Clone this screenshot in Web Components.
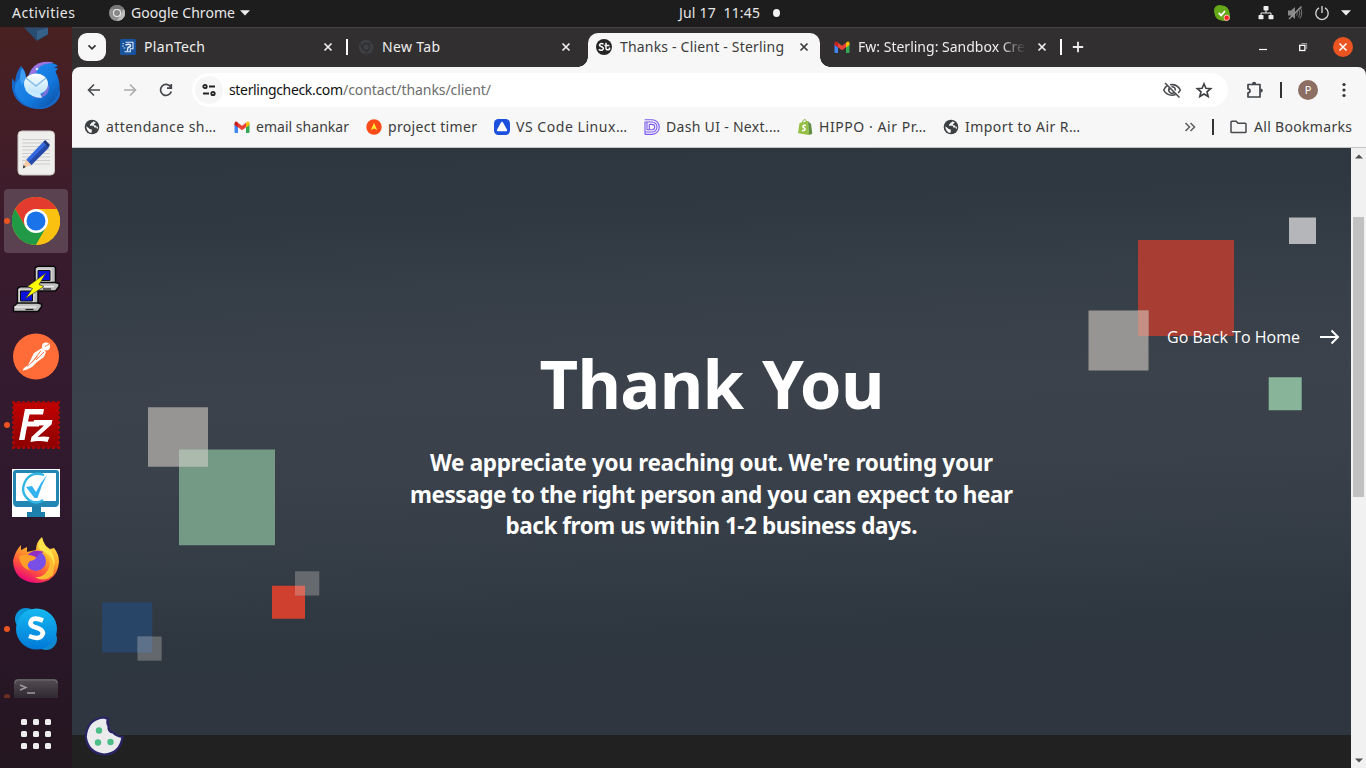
<!DOCTYPE html>
<html lang="en">
<head>
<meta charset="utf-8">
<title>Thanks - Client - Sterling</title>
<style>
html,body{margin:0;height:100%;overflow:hidden;background:#222}
body{font-family:"Noto Sans","Open Sans",sans-serif}
</style>
</head>
<body>
<desk-top></desk-top>
<script>
const define=(name,html,setup)=>customElements.define(name,class extends HTMLElement{
  constructor(){super();this.attachShadow({mode:'open'})}
  connectedCallback(){
    this.shadowRoot.innerHTML=typeof html==='function'?html(this):html;
    if(setup)setup(this);
  }
});

/* text run tracked to an exact advance width; ws adds extra word spacing */
define('fit-text',`<style>:host{display:block;flex:none;white-space:pre;line-height:20px}span{display:inline-block}</style><span></span>`,el=>{
  const s=el.shadowRoot.querySelector('span'),w=+el.getAttribute('w'),t=el.getAttribute('text');
  s.textContent=t;
  s.style.wordSpacing=(el.getAttribute('ws')||0)+'px';
  const n=s.getBoundingClientRect().width;
  s.style.letterSpacing=((w-n)/(t.length-1)).toFixed(4)+'px';
  el.style.width=w+'px';
});

const gmail='<path fill="#4285f4" d="M0.500 4.500L4 7v7H1.500q-1 0-1-1z"/><path fill="#34a853" d="M12 7l3.500-2.500V13q0 1-1 1H12z"/><path fill="#fbbc04" d="M12 4l1-1.200q2.500-1.300 2.500 1.700v1.500L12 8.500z"/><path fill="#c5221f" d="M.5 6V4.500q0-3 2.500-1.700l1 1v4.700z"/><path fill="#ea4335" d="M4 3.700L8 6.700l4-3v4.600L8 11.300 4 8.300z"/>';
const globe='<circle cx="8" cy="8" r="7.300" fill="#3c4043"/><path d="M2.200 7.200L5 9.200q.4 1 1.500 1l1.300.2v2.200q-.5.600-.3 1.300Q3 13.500 2.200 7.200zM9.500 2.200q-.3 1.300-2 1.500-.7 1.500-1.500 1.700v1.400h3.500l1 1.700h2.200l.3 2q1-1.300.9-2.700l-1.500-.3-1-1.300h-1.700q.5-2.200 2.300-2.500-1-1-2.500-1.500z" fill="#f7f7f7"/>';
const I={
 down:['0 0 16 16','<path d="M4.500 6.300l3.500 3.500 3.500-3.500" fill="none" stroke="#333" stroke-width="1.700"/>'],
 chromeGray:['0 0 48 48','<circle cx="24" cy="24" r="24" fill="#909090"/><path d="M4 11Q12 0 24 0q14 0 21 12H24z" fill="#777"/><path d="M45 12q10 22-11 34L24 48l10-18z" fill="#bbb"/><circle cx="24" cy="24" r="12" fill="#eee"/><circle cx="24" cy="24" r="9" fill="#888"/>'],
 chromeDim:['0 0 48 48','<circle cx="24" cy="24" r="22" fill="#3d3f42"/><path d="M24 13h22M14 29L4 11M33 29L22 47" stroke="#322f30" stroke-width="3"/><circle cx="24" cy="24" r="10.500" fill="#3e4145" stroke="#2e2d2e" stroke-width="4"/>'],
 tri:['0 0 10 6','<path d="M0 .3h10L5 5.600z" fill="#eee"/>'],
 plan:['0 0 16 16','<rect width="16" height="16" rx="1.500" fill="#19529d"/><path d="M5.500 3.200H13v6.500h-2.700v3H4.500" stroke="#dbe9f7" stroke-width="1.100" fill="none"/><path d="M5.500 6q3.500-1.500 5 0 .3 2-2.500 2.500l-.7 3.500" stroke="#e4eefa" stroke-width="1.400" fill="none"/><path d="M2.500 4.500h1.500M2 7h2M3.500 9h2" stroke="#b7cfea" stroke-width="1"/>'],
 x:['0 0 10 10','<path d="M1.500 1.500l7 7m0-7l-7 7" stroke="currentColor" stroke-width="1.700"/>'],
 st:['0 0 16 16','<circle cx="8" cy="8" r="8" fill="#242424"/><path d="M7.500 5.400Q6 4.200 4.400 4.800 2.800 5.700 4 7l2.500 1.200Q8.300 9.600 6.500 11 4.500 11.800 2.700 10.300M10 3.700v5.600q.3 2.500 3.500 1v-1.800M8.400 6.500h5" fill="none" stroke="#f5f5f5" stroke-width="1.500"/>'],
 gmail:['0 0 16 16',gmail], globe:['0 0 16 16',globe],
 plus:['0 0 12 12','<path d="M6 .8v10.400M.8 6h10.400" stroke="#eee" stroke-width="1.800"/>'],
 min:['0 0 10 10','<path d="M1 7.500h8" stroke="#fff" stroke-width="1.200"/>'],
 restore:['0 0 10 10','<rect x="1.700" y="3.300" width="5.200" height="5.200" fill="none" stroke="#fff" stroke-width="1.300"/><path d="M3.500 1.500h5.200v5.500" fill="none" stroke="#999" stroke-width="1"/>'],
 close:['0 0 20 20','<circle cx="10" cy="10" r="10" fill="#e95420"/><path d="M6.500 6.500l7 7m0-7l-7 7" stroke="#fff" stroke-width="1.500"/>'],
 back:['0 0 16 16','<path d="M14 8H3M8 2.500L2.500 8 8 13.500" fill="none" stroke="#45484c" stroke-width="1.600"/>'],
 fwd:['0 0 16 16','<path d="M2 8h11M8 2.500L13.500 8 8 13.500" fill="none" stroke="#acacac" stroke-width="1.600"/>'],
 reload:['0 0 16 16','<path d="M12.700 5A5.500 5.500 0 1 0 13.300 9.500M13.300 2v4.200H9" fill="none" stroke="#45484c" stroke-width="1.700"/>'],
 tune:['0 0 28 28','<circle cx="14" cy="14" r="14" fill="#f6f6f6"/><g fill="none" stroke="#222" stroke-width="1.800"><circle cx="10" cy="10.500" r="1.700"/><path d="M14 10.500h6M8 17.500h6"/><circle cx="18" cy="17.500" r="1.700"/></g>'],
 eye:['0 0 20 20','<g fill="none" stroke="#484a4d" stroke-width="1.600"><path d="M5.300 5.700Q3 7.200 1.700 10q2.600 5 8.300 5.300 2 0 3.600-.7M8 4.800q7-1.200 10.300 5.200-.8 1.700-2.200 3"/><path d="M7.500 8a3.300 3.300 0 0 0 4.500 4.700M9.500 6.700q3.800-.3 3.900 3.700"/><path d="M3 3l14.500 14.500"/></g>'],
 star:['0 0 18 18','<path d="M9 2.800l1.900 4.400 4.800.4-3.700 3.200 1.200 4.700L9 13l-4.200 2.500L6 10.800 2.300 7.600l4.800-.4z" fill="none" stroke="#3c3e42" stroke-width="1.600"/>'],
 puzzle:['0 0 18 18','<path d="M2 3.500H14V16H2v-4.200a2 2 0 0 0 0-4z" fill="none" stroke="#424548" stroke-width="1.700" stroke-linejoin="round"/><path d="M6 3a2 2.200 0 0 1 4.200 0zM14.500 7.500a2.200 2 0 0 1 0 4.200z" fill="#424548"/>'],
 dots:['0 0 4 16','<g fill="#333"><circle cx="2" cy="2.500" r="1.600"/><circle cx="2" cy="8" r="1.600"/><circle cx="2" cy="13.500" r="1.600"/></g>'],
 timer:['0 0 16 16','<circle cx="8" cy="8" r="7.700" fill="#fa4b18"/><path d="M8 4l3.200 7L8 9.500 4.800 11z" fill="#fe3"/>'],
 vs:['0 0 16 16','<rect width="16" height="16" rx="4.500" fill="#1d50dc"/><path d="M8 2.800q.6 0 1 .8l4 7.200q.6 1.500-1 1.500H4q-1.600 0-1-1.500l4-7.200q.4-.8 1-.8z" fill="#fff"/>'],
 dash:['0 0 16 16','<g fill="none" stroke="#7c5cf0" stroke-width="1.150"><path d="M.7.700h7.300a7.300 7.300 0 0 1 0 14.600H.7"/><path d="M.7 3H8a5 5 0 0 1 0 10H.7M3 3v8M5.300 5.300v5.400M1 3v12M5.300 5.300H8a2.700 2.700 0 0 1 0 5.400H3"/></g>'],
 shop:['0 0 16 16','<path d="M2.500 4l8.500-2 1 14-11-1.800z" fill="#95bf47"/><path d="M11 2l1.300 1.500L14 4.800l1.300 9.900L12 16z" fill="#5e8e3e"/><path d="M5 4q1-3.700 3-3.500 1.500.5 1.500 3" fill="none" stroke="#7eaa3b" stroke-width=".9"/><path d="M9 6.500Q5.500 5.700 6 8l2 1.700Q8.400 12 5 11.500" fill="none" stroke="#fff" stroke-width="1.500"/>'],
 more:['0 0 12 12','<path d="M1.500 2l4 4-4 4M6.500 2l4 4-4 4" fill="none" stroke="#5a5d60" stroke-width="1.500"/>'],
 folder:['0 0 17 14','<path d="M1 2q0-.8.8-.8h4.400l1.800 2h7.200q.8 0 .8.8v7.700q0 .8-.8.8H1.800q-.8 0-.8-.8z" fill="none" stroke="#474a4d" stroke-width="1.500"/>'],
 skypeTray:['0 0 16 16','<circle cx="5.500" cy="5.500" r="5.500" fill="#65a818"/><circle cx="10.500" cy="10.500" r="5.500" fill="#65a818"/><circle cx="8" cy="8" r="7.500" fill="#65a818"/><path d="M4.700 8l2.500 2.400L11 6" stroke="#fff" stroke-width="1.800" fill="none"/><circle cx="12.700" cy="12.800" r="2.700" fill="#f22" stroke="#fcc" stroke-width=".9"/>'],
 net:['0 0 16 16','<g fill="#eee"><rect x="5.500" y="1" width="5" height="4.500" rx=".8"/><rect x=".5" y="10" width="5" height="4.300" rx=".8"/><rect x="10.500" y="10" width="5" height="4.300" rx=".8"/></g><path d="M8 5v3M3 10.500V8h10v2.500" fill="none" stroke="#eee" stroke-width="1"/>'],
 mute:['0 0 16 16','<path d="M1 5.500h3L8 2v12l-4-3.500H1z" fill="#888"/><path d="M9.500 5.500q2 2.500 0 5M11.500 3.700q3 4.300 0 8.600M13.200 2.200q3.300 5.800-.3 11.400" fill="none" stroke="#777" stroke-width="1"/><path d="M14.500 1.500L2 14" stroke="#999" stroke-width="1.200"/>'],
 power:['0 0 16 16','<path d="M5 2.900A6.200 6.200 0 1 0 11 2.900M8 1v7" fill="none" stroke="#ddd" stroke-width="1.300"/>'],
 arrow:['0 0 20 16','<path d="M0 8h18M11.500 1.500L18 8l-6.500 6.500" fill="none" stroke="#fff" stroke-width="2"/>'],
 code:['0 0 48 48','<path d="M12 34.500h24v7L25 48z" fill="#294d71"/><path d="M25 38l11-3v6l-11 6z" fill="#35618a"/>'],
 bird:['0 0 48 48','<defs><linearGradient id="a" x2="1" y2="1"><stop stop-color="#2590f0"/><stop offset=".6" stop-color="#1379e0"/><stop offset="1" stop-color="#0c4996"/></linearGradient><linearGradient id="b" x2="0" y2="1"><stop stop-color="#fff"/><stop offset="1" stop-color="#b7e2fb"/></linearGradient></defs><path d="M0 17l3 4Q4 11 9 5q6 6 5 14 0 12 18 12L44 22q9 12-2 21-8 6-18 5Q3 45 0 27z" fill="#1769c9"/><path d="M3 31Q2 22 8 17l7 1Q19 5 29 2q12-2 17 3l-4 1.500 4 1-2.500 3q5 11 4 17Q44 45 26 47 9 46 3 31z" fill="url(#a)"/><path d="M17 14Q20 3 31 1q7-1 11 1-16 0-18 10z" fill="#9a73e0"/><path d="M10 24q-4-8 0-17 4 5 4 11z" fill="#3e9ef4"/><path d="M33 18q7 8 2 15-7 7-16 2 12 2 15-7z" fill="#7b72dc"/><ellipse cx="24" cy="23" rx="12" ry="10.500" fill="url(#b)"/><path d="M14 17l10 8 10-8" fill="none" stroke="#84bce7" stroke-width="1.500"/><path d="M13 28q8 5 15 4l2 5q-10 0-16-7z" fill="#c7eaff"/><circle cx="25" cy="8" r="1.300" fill="#c9edff"/>'],
 editor:['0 0 48 48','<rect x="6" y="2" width="36.500" height="44" rx="4" fill="#eeeeec" stroke="#cac5c3"/><path d="M10 10.500h28M10 14h28M10 17.500h28M10 21h28M10 24.500h28M10 28h28M10 31.500h28M10 35h28" stroke="#cdcdcd"/><path d="M14 31L31 13l5 5-17 18z" fill="#3468dd"/><path d="M16.500 33.500L34 15.500l3 3-18 18z" fill="#2549a9"/><path d="M14 30.500l5.500 5.500-8.500 3z" fill="#f5cba3"/><path d="M11.500 36l2.300 2-3 1.500z" fill="#333"/><path d="M31 13l2.200-2L38 16l-2 2.300z" fill="#1c357d"/>'],
 chrome:['0 0 48 48','<circle cx="24" cy="24" r="24" fill="#fbbc05"/><path d="M3.200 12A24 24 0 0 1 44.800 12L24 12 13.600 30z" fill="#e33b2e"/><path d="M3.200 12A24 24 0 0 0 24 48l10.400-18H13.600z" fill="#219a47"/><path d="M24 12h20.800A24 24 0 0 1 24 48l10.400-18z" fill="#fbc110"/><circle cx="24" cy="24" r="12" fill="#fff"/><circle cx="24" cy="24" r="9.500" fill="#1a73e8"/>'],
 putty:['0 0 48 48','<defs><g id="pc"><path d="M5 2.500L7.500.8H24l1.500 1.500V17l-2.500 2H5z" fill="#bdbdbd" stroke="#0a0a0a" stroke-width="1.500"/><path d="M6 3h16v14H6z" fill="#d4d4d4"/><path d="M8 5h12v10H8z" fill="#0b12dc" stroke="#111" stroke-width="1"/><path d="M1 20.500L5 17h20l4 1v3l-3.500 4.500H1z" fill="#c0c0c0" stroke="#0a0a0a" stroke-width="1.500"/><path d="M2 21h22" stroke="#eee" stroke-width="1.300"/><path d="M13 23.500h8" stroke="#222" stroke-width="1.300"/></g></defs><use href="#pc" x="18" y=".5"/><use href="#pc" x=".5" y="21"/><path d="M34 8L15.500 21.500l5 2-7 10L32 21.500l-5-2z" fill="#ff0" stroke="#333" stroke-width=".7"/>'],
 postman:['0 0 48 48','<circle cx="24" cy="23.500" r="23" fill="#ff6c37"/><circle cx="34" cy="13.500" r="4" fill="#fff"/><path d="M22 20l8-5 4 4-2 5-7 5-5 5-6 3-3.500.5 1.500-2.500 4-3z" fill="#fff"/><path d="M15 33.500l11-10M20 29.500l9-12M24 27l8-8M33 13.500l4-2.500" stroke="#ff6c37" stroke-width=".9"/>'],
 fz:['0 0 48 48','<defs><linearGradient id="z" x2="0" y2="1"><stop stop-color="#c30000"/><stop offset="1" stop-color="#8d0000"/></linearGradient></defs><rect x="1.500" y="1.500" width="45" height="45" fill="url(#z)"/><rect x="1.500" y="1.500" width="45" height="45" fill="none" stroke="#a90505" stroke-width="3.400" stroke-linecap="round" stroke-dasharray="0 5"/><path d="M7 39L13 8h19l-1 5.500H17.500l-1.500 7h12l-1 5H15L12.500 39zM22 19h18.500l-1 4.500-14 12.500q6-1 12 0l-2 5q-8-2-17 0l1-5 12.500-11.500H21z" fill="#fff"/>'],
 vm:['0 0 48 48','<path d="M0 0h48v48H0z" fill="#fff"/><path d="M1 4q0-3 3-3h40q3 0 3 3v29q0 5-4 5H5q-4 0-4-5z" fill="#2287b3"/><path d="M4 4h40v28H4z" fill="#fff"/><path d="M20 37h9v6h4v5H15v-5h5z" fill="#1d7fab"/><path d="M32 6Q20 2 14 11q-7 12 3 20 7 5 14 0" fill="none" stroke="#31b6e4" stroke-width="2.300"/><path d="M14 18l6-1 4 6Q28 14 35 6q-6 11-9.500 23h-3z" fill="#31b3f2"/>'],
 firefox:['0 0 48 48','<defs><linearGradient id="f" x1=".8" y1="0" x2=".3" y2="1"><stop stop-color="#fff050"/><stop offset=".42" stop-color="#ffa52a"/><stop offset=".7" stop-color="#ff553b"/><stop offset="1" stop-color="#e7007e"/></linearGradient></defs><path d="M1 24Q3 14 9 8v5l6-3v5l9-2Q24 5 30 0q2 9 8 12l4-1q5 6 5 14-2 20-22 21Q2 45 1 24z" fill="url(#f)"/><path d="M30 1q2 9 9 13 6 10 2 18-3-16-14-20-2-6 3-11z" fill="#ffe44c"/><circle cx="24" cy="24" r="10" fill="#7850e8"/><path d="M15 19q6-8 17-4l-5 2-3 4-7 2z" fill="#912fc2"/><path d="M7 19q8-3 17 1 0 3-6 4-5 5 1 10-11-3-12-15z" fill="#ff9f2a"/><path d="M32 15q9 8 4 18-5 8-13 7 9 6 18-2 4-17-9-23z" fill="#ffbc31"/>'],
 skype:['0 0 48 48','<defs><linearGradient id="s" x2="0" y2="1"><stop stop-color="#16b9f1"/><stop offset="1" stop-color="#0179d8"/></linearGradient></defs><circle cx="14" cy="14" r="11" fill="#0997db"/><circle cx="34" cy="34" r="11" fill="#1089d0"/><circle cx="24.500" cy="24" r="20.500" fill="url(#s)"/><path d="M31 15.500Q20 11 18.500 17.500 18 21 24 22.500T31 28Q29 36 17 31" fill="none" stroke="#fff" stroke-width="4.600"/>'],
 term:['0 0 48 48','<defs><linearGradient id="t" x2="0" y2="1"><stop stop-color="#5a555a"/><stop offset=".5" stop-color="#302a32"/></linearGradient></defs><rect x="2" y="6" width="44" height="38" rx="4" fill="url(#t)"/><path d="M3 10q0-3 3-3h36q3 0 3 3" fill="none" stroke="#777" /><path d="M8 12l6 2.500-6 2.500M15 20h8" fill="none" stroke="#aaa" stroke-width="1.400"/>'],
 apps:['0 0 32 32','<g fill="#eee">'+[1,13,25].map(y=>[1,13,25].map(x=>`<rect x="${x}" y="${y}" width="6" height="6" rx="1.500"/>`).join('')).join('')+'</g>'],
 cookie:['0 0 40 40','<path d="M20 1.500l4 1.500q-1.500 4 .5 7-.5 6 4.500 6.500 4 4 9.500 4.500Q36 38 20 38.500 4 37 1.700 21 3 3 20 1.500z" fill="#ebebed" stroke="#2b2367" stroke-width="2.200"/><g fill="#4cbd87"><circle cx="15" cy="14.500" r="3.200"/><circle cx="14" cy="26.500" r="3.200"/><circle cx="26.500" cy="26" r="3.200"/></g>'],
};
define('ui-icon',el=>{
  const [vb,body]=I[el.getAttribute('n')],w=el.getAttribute('w')||16,h=el.getAttribute('h')||w;
  return `<style>:host{display:block;flex:none;width:${w}px;height:${h}px}svg{display:block}</style><svg width="${w}" height="${h}" viewBox="${vb}">${body}</svg>`;
});

define('system-bar',`<style>
:host{display:flex;height:27px;background:#1d1d1d;color:#e8e8e8;font-size:14px;align-items:center;box-sizing:border-box;padding:0 15px 1px 12px}
.date{margin-left:429px}.dot{width:8px;height:8px;border-radius:50%;background:#f3f3f3;margin-left:13px}
</style>
<fit-text w="63" text="Activities"></fit-text><ui-icon n="chromeGray" style="margin-left:34px"></ui-icon>
<fit-text w="104" text="Google Chrome" style="margin-left:6px"></fit-text><ui-icon n="tri" w="10" h="6" style="margin-left:5px"></ui-icon>
<fit-text class="date" w="81" text="Jul 17  11:45"></fit-text><div class="dot"></div>
<ui-icon n="skypeTray" style="margin-left:434px"></ui-icon><ui-icon n="net" style="margin-left:28px"></ui-icon><ui-icon n="mute" style="margin-left:13px"></ui-icon><ui-icon n="power" style="margin-left:11px"></ui-icon><ui-icon n="tri" w="10" h="6" style="margin-left:11px"></ui-icon>`);

define('dock-item',el=>`<style>
:host{display:flex;height:64px;width:64px;margin:0 4px 4px;border-radius:4px;align-items:center;justify-content:center;flex:none;position:relative}
:host([active]){background:#5b4251}
:host([running])::before{content:"";position:absolute;left:0;top:29px;width:6px;height:6px;border-radius:50%;background:#e95420}
:host([dim]){opacity:.9}:host([dim])::before{opacity:.4}
</style><ui-icon n="${el.getAttribute('icon')}" w="48"></ui-icon>`);
define('dock-bar',`<style>
:host{display:flex;flex-direction:column;width:72px;background:linear-gradient(#482121,#431e27 13%,#391b2d 30%,#331a2f 52%,#2b172b 75%,#241620)}
.list{height:671px;overflow:hidden;flex:none}.in{margin-top:-42px}.apps{flex:1;display:flex;justify-content:center;padding-top:20px}
</style><div class="list"><div class="in">
<dock-item icon="code"></dock-item><dock-item icon="bird"></dock-item><dock-item icon="editor"></dock-item><dock-item icon="chrome" active running></dock-item><dock-item icon="putty"></dock-item><dock-item icon="postman"></dock-item><dock-item icon="fz" running></dock-item><dock-item icon="vm"></dock-item><dock-item icon="firefox"></dock-item><dock-item icon="skype" running></dock-item><dock-item icon="term" running dim></dock-item>
</div></div><div class="apps"><ui-icon n="apps" w="32"></ui-icon></div>`);

define('browser-tab',el=>{const a=k=>el.getAttribute(k);return `<style>
:host{display:flex;align-items:center;flex:none;box-sizing:border-box;height:34px;padding-bottom:6px;width:${a('width')}px;padding-left:${a('pad')}px;color:#eee;position:relative}
.t{width:168px;margin-left:8px;flex:none;font-size:14px}
:host([fade]) .t{-webkit-mask-image:linear-gradient(90deg,#000 85%,rgba(0,0,0,.55) 91%,transparent);mask-image:linear-gradient(90deg,#000 85%,rgba(0,0,0,.55) 91%,transparent)}
:host([active]){background:#f7f7f7;color:#3c3c3c;border-radius:10px 10px 0 0}
:host([active])::before,:host([active])::after{content:"";position:absolute;bottom:0;width:10px;height:10px}
:host([active])::before{left:-10px;background:radial-gradient(circle at 0 0,transparent 9.500px,#f7f7f7 10px)}
:host([active])::after{right:-10px;background:radial-gradient(circle at 100% 0,transparent 9.500px,#f7f7f7 10px)}
.x{margin-left:auto;margin-right:${a('end')}px}.sep{width:2px;height:16px;background:#fff;flex:none}
</style><ui-icon n="${a('icon')}"></ui-icon><div class="t"><fit-text w="${a('tw')}" text="${a('text')}"></fit-text></div><ui-icon class="x" n="x" w="10"></ui-icon>${el.hasAttribute('sep')?'<i class="sep"></i>':''}`});
define('tab-strip',`<style>
:host{display:flex;height:40px;background:#322f30;border-top:1px solid #484546;box-sizing:border-box;padding:5px 13px 0 6px}
.b{width:28px;height:28px;border-radius:9px;background:#f7f7f7;display:grid;place-items:center;flex:none}
.w{display:flex;height:28px;align-items:center;flex:1}
</style><div class="b"><ui-icon n="down"></ui-icon></div>
<browser-tab width="242" pad="14" icon="plan" text="PlanTech" tw="61" end="13" sep></browser-tab>
<browser-tab width="240" pad="10" icon="chromeDim" text="New Tab" tw="58" end="17"></browser-tab>
<browser-tab width="232" pad="8" icon="st" text="Thanks - Client - Sterling" tw="164" end="11" active></browser-tab>
<browser-tab width="242" pad="14" icon="gmail" text="Fw: Sterling: Sandbox Cre" tw="167" end="13" sep fade></browser-tab>
<div class="w"><ui-icon n="plus" w="12" style="margin-left:10px"></ui-icon><ui-icon n="min" w="10" style="margin-left:auto"></ui-icon><ui-icon n="restore" w="10" style="margin-left:30px"></ui-icon><ui-icon n="close" w="20" style="margin-left:25px"></ui-icon></div>`);

define('tool-bar',`<style>
:host{display:flex;align-items:center;height:46px;background:#f7f7f7;padding:0 20px 0 14px;box-sizing:border-box;border-radius:8px 8px 0 0}
.url{display:flex;align-items:center;background:#fff;height:34px;width:1036px;border-radius:17px;margin-left:18px;padding:0 15px 0 3px;box-sizing:border-box;font-size:14px;color:#6d6d6d;flex:none}
.sep{width:2px;height:16px;background:#333;margin-left:16px}.p{width:20px;height:20px;border-radius:50%;background:#8d6e63;color:#fff;font:11px/20px "Noto Sans",sans-serif;text-align:center;margin-left:16px}
</style><ui-icon n="back"></ui-icon><ui-icon n="fwd" style="margin-left:20px"></ui-icon><ui-icon n="reload" style="margin-left:20px"></ui-icon>
<div class="url"><ui-icon n="tune" w="28"></ui-icon><fit-text w="114" text="sterlingcheck.com" style="margin-left:6px;color:#111"></fit-text><fit-text w="148" text="/contact/thanks/client/"></fit-text><ui-icon n="eye" w="20" style="margin-left:auto"></ui-icon><ui-icon n="star" w="18" style="margin-left:13px"></ui-icon></div>
<ui-icon n="puzzle" w="18" style="margin-left:18px"></ui-icon><div class="sep"></div><div class="p">P</div><ui-icon n="dots" w="4" h="16" style="margin-left:24px"></ui-icon>`);

define('book-mark',el=>`<style>:host{display:flex;align-items:center;flex:none;gap:6px;box-sizing:border-box;width:${el.getAttribute('width')}px}</style>
<ui-icon n="${el.getAttribute('icon')}"></ui-icon><fit-text w="${el.getAttribute('tw')}" text="${el.getAttribute('text')}"></fit-text>`);
define('bookmark-bar',`<style>
:host{display:flex;align-items:center;height:35px;background:#f7f7f7;border-bottom:1px solid #c4c4c4;box-sizing:border-box;padding:0 14px 6px 12px;font-size:14px;color:#3c3c3c}
.sep{width:2px;height:16px;background:#333;margin:0 16px}
</style>
<book-mark width="150" icon="globe" text="attendance sh…" tw="110"></book-mark>
<book-mark width="132" icon="gmail" text="email shankar" tw="93"></book-mark>
<book-mark width="128" icon="timer" text="project timer" tw="89"></book-mark>
<book-mark width="150" icon="vs" text="VS Code Linux…" tw="111"></book-mark>
<book-mark width="153" icon="dash" text="Dash UI - Next.…" tw="114"></book-mark>
<book-mark width="146" icon="shop" text="HIPPO · Air Pr…" tw="107"></book-mark>
<book-mark width="160" icon="globe" text="Import to Air R…" tw="115"></book-mark>
<ui-icon n="more" w="12" style="margin-left:auto"></ui-icon><div class="sep"></div><ui-icon n="folder" w="17" h="14"></ui-icon><fit-text w="98" text="All Bookmarks" style="margin-left:7px"></fit-text>`);

/* translucent squares scattered over the hero */
define('hero-squares',`<style>:host{position:absolute;inset:0}svg{display:block}</style>
<svg width="1279" height="587" viewBox="72 148 1279 587">
<path d="M1138 240h96v96h-96z" fill="#a83e33"/><path d="M1088.500 310.500h60v60h-60z" fill="#969594"/><path d="M1138 310.500h10.500V336H1138z" fill="#c68f84"/>
<path d="M1289 217.500h27V244h-27z" fill="#b5b6b9"/><path d="M1268.700 377.300h33v33h-33z" fill="#88b59a"/>
<path d="M148 407.300h60v59.500h-60z" fill="#969594"/><path d="M179 449.500h96v95.700h-96z" fill="#749a85"/><path d="M179 449.500h29v17.300h-29z" fill="#acb9ad"/>
<path d="M272 585.700h33v33h-33z" fill="#d0402f"/><path d="M295 571.300h24.300v24.200H295z" fill="#666a6e"/><path d="M295 585.700h10v9.800h-10z" fill="#d76a5c"/>
<path d="M102 602.300h50.300v50.300H102z" fill="#284467"/><path d="M137.500 636.500h24.200v24.200h-24.200z" fill="#63686c"/><path d="M137.500 636.500h14.800v16.100h-14.800z" fill="#5e718b"/>
</svg>`);
define('thank-page',`<style>
:host{display:flex;flex-direction:column;position:relative;flex:1;background:#212121;color:#fff;overflow:hidden}
.hero{height:587px;position:relative;display:flex;flex-direction:column;align-items:center;background:linear-gradient(178deg,#2e3640 0,#2f3740 12%,#363e47 25%,#3b424b 40%,#3a414b 53%,#343c45 68%,#2e363f 80%,#2f363f 100%)}
h1,p{margin:0;position:relative;display:flex;flex-direction:column;align-items:center}
h1{font-size:67px;padding:221px 0 0 1px;font-weight:700}h1 fit-text{line-height:28px}
p{font-size:22.500px;font-weight:700;margin-top:50px}p fit-text{line-height:31.500px}
a{position:absolute;left:1095px;top:179px;display:flex;gap:20px;align-items:center;font-family:"Open Sans","Noto Sans",sans-serif;font-size:16px}
.c{position:absolute;left:12px;top:568px}
</style><div class="hero"><hero-squares></hero-squares>
<h1><fit-text w="345" ws="2" text="Thank You"></fit-text></h1>
<p><fit-text w="563" text="We appreciate you reaching out. We're routing your"></fit-text><fit-text w="603" text="message to the right person and you can expect to hear"></fit-text><fit-text w="412" text="back from us within 1-2 business days."></fit-text></p>
<a><fit-text w="133" text="Go Back To Home"></fit-text><ui-icon n="arrow" w="20" h="16"></ui-icon></a></div>
<ui-icon class="c" n="cookie" w="40"></ui-icon>`);
define('scroll-bar',`<style>:host{display:flex;flex-direction:column;width:15px;background:#f1f1f1;align-items:center;justify-content:space-between;box-sizing:border-box;padding:6px 0 5px}
.th{width:11px;height:280px;background:#c1c1c1;margin:58px 0 auto}svg{display:block}</style>
<svg width="8" height="5"><path d="M0 4.500h8L4 .5z" fill="#505050"/></svg><div class="th"></div><svg width="8" height="5"><path d="M0 .5h8L4 4.500z" fill="#505050"/></svg>`);
define('browser-window',`<style>:host{display:flex;flex-direction:column;flex:1;background:#322f30;min-width:0}.v{display:flex;flex:1;min-height:0}</style>
<tab-strip></tab-strip><tool-bar></tool-bar><bookmark-bar></bookmark-bar><div class="v"><thank-page></thank-page><scroll-bar></scroll-bar></div>`);
define('desk-top',`<style>:host{display:flex;flex-direction:column;width:1366px;height:768px;overflow:hidden}.m{display:flex;flex:1;min-height:0}</style>
<system-bar></system-bar><div class="m"><dock-bar></dock-bar><browser-window></browser-window></div>`);
</script>
</body>
</html>
